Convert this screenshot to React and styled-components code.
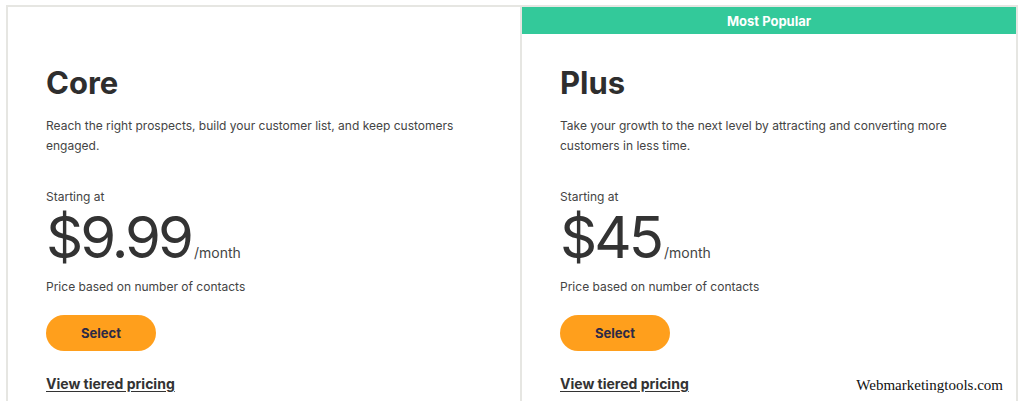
import React from "react";
import styled, { createGlobalStyle } from "styled-components";

const GlobalStyle = createGlobalStyle`
    html, body {
        margin: 0;
        padding: 0;
        background: #ffffff;
        overflow: hidden;
    }
    body {
        font-family: "Inter", "Noto Sans", sans-serif;
        color: #333333;
    }
`;

const Page = styled.div`
    width: 1024px;
    height: 401px;
    padding: 5px 0 0 6px;
    box-sizing: border-box;
    overflow: hidden;
    position: relative;
`;

const Plans = styled.div`
    display: flex;
    align-items: stretch;
    height: 420px;
`;

const Card = styled.section`
    box-sizing: border-box;
    width: ${(p) => p.$width}px;
    border: 2px solid #e6e6e2;
    border-bottom: none;
    border-right: ${(p) => (p.$last ? "2px solid #e6e6e2" : "none")};
    display: flex;
    flex-direction: column;
`;

const Ribbon = styled.div`
    height: 27px;
    background: ${(p) => (p.$show ? "#33c99a" : "transparent")};
    color: #ffffff;
    font-size: 13px;
    font-weight: 700;
    display: flex;
    align-items: center;
    justify-content: center;
`;

const Body = styled.div`
    padding: 29px 39px 0 38px;
    display: flex;
    flex-direction: column;
    align-items: flex-start;
`;

const Title = styled.h2`
    margin: 0;
    font-size: 31px;
    font-weight: 700;
    line-height: 40px;
    color: #2e2e2e;
`;

const Description = styled.p`
    margin: 13px 0 0;
    font-size: 12px;
    line-height: 20px;
    color: #444444;
    max-width: 420px;
    height: 40px;
`;

const Starting = styled.div`
    margin-top: 33px;
    font-size: 12px;
    line-height: 16px;
    color: #444444;
`;

const PriceRow = styled.div`
    display: flex;
    align-items: baseline;
    margin-top: 3px;
`;

const Amount = styled.span`
    font-size: 58px;
    font-weight: 400;
    line-height: 58px;
    color: #333333;
    letter-spacing: -3px;
`;

const Period = styled.span`
    font-size: 14px;
    line-height: 16px;
    color: #444444;
    margin-left: 3px;
`;

const Note = styled.div`
    margin-top: 11px;
    font-size: 12px;
    line-height: 20px;
    color: #444444;
`;

const SelectButton = styled.button`
    margin-top: 18px;
    width: 110px;
    height: 36px;
    border: none;
    border-radius: 18px;
    background: #ff9f1c;
    color: #2c2a46;
    font-family: inherit;
    font-size: 13px;
    font-weight: 700;
    cursor: pointer;
`;

const TierLink = styled.a`
    margin-top: 24px;
    font-size: 14px;
    font-weight: 700;
    color: #333333;
    text-decoration: underline;
    text-underline-offset: 2px;
`;

const Watermark = styled.div`
    position: absolute;
    right: 21px;
    bottom: 7px;
    font-family: "Liberation Serif", serif;
    font-size: 15px;
    color: #111111;
`;

const plans = [
    {
        name: "Core",
        width: 514,
        text: "Reach the right prospects, build your customer list, and keep customers engaged.",
        price: "$9.99",
        popular: false,
    },
    {
        name: "Plus",
        width: 498,
        text: "Take your growth to the next level by attracting and converting more customers in less time.",
        price: "$45",
        popular: true,
    },
];

const App = () => (
    <>
        <GlobalStyle />
        <Page>
            <Plans>
                {plans.map((plan, i) => (
                    <Card key={plan.name} $width={plan.width} $last={i === plans.length - 1}>
                        <Ribbon $show={plan.popular}>{plan.popular ? "Most Popular" : ""}</Ribbon>
                        <Body>
                            <Title>{plan.name}</Title>
                            <Description>{plan.text}</Description>
                            <Starting>Starting at</Starting>
                            <PriceRow>
                                <Amount>{plan.price}</Amount>
                                <Period>/month</Period>
                            </PriceRow>
                            <Note>Price based on number of contacts</Note>
                            <SelectButton>Select</SelectButton>
                            <TierLink href="#">View tiered pricing</TierLink>
                        </Body>
                    </Card>
                ))}
            </Plans>
            <Watermark>Webmarketingtools.com</Watermark>
        </Page>
    </>
);

export default App;
